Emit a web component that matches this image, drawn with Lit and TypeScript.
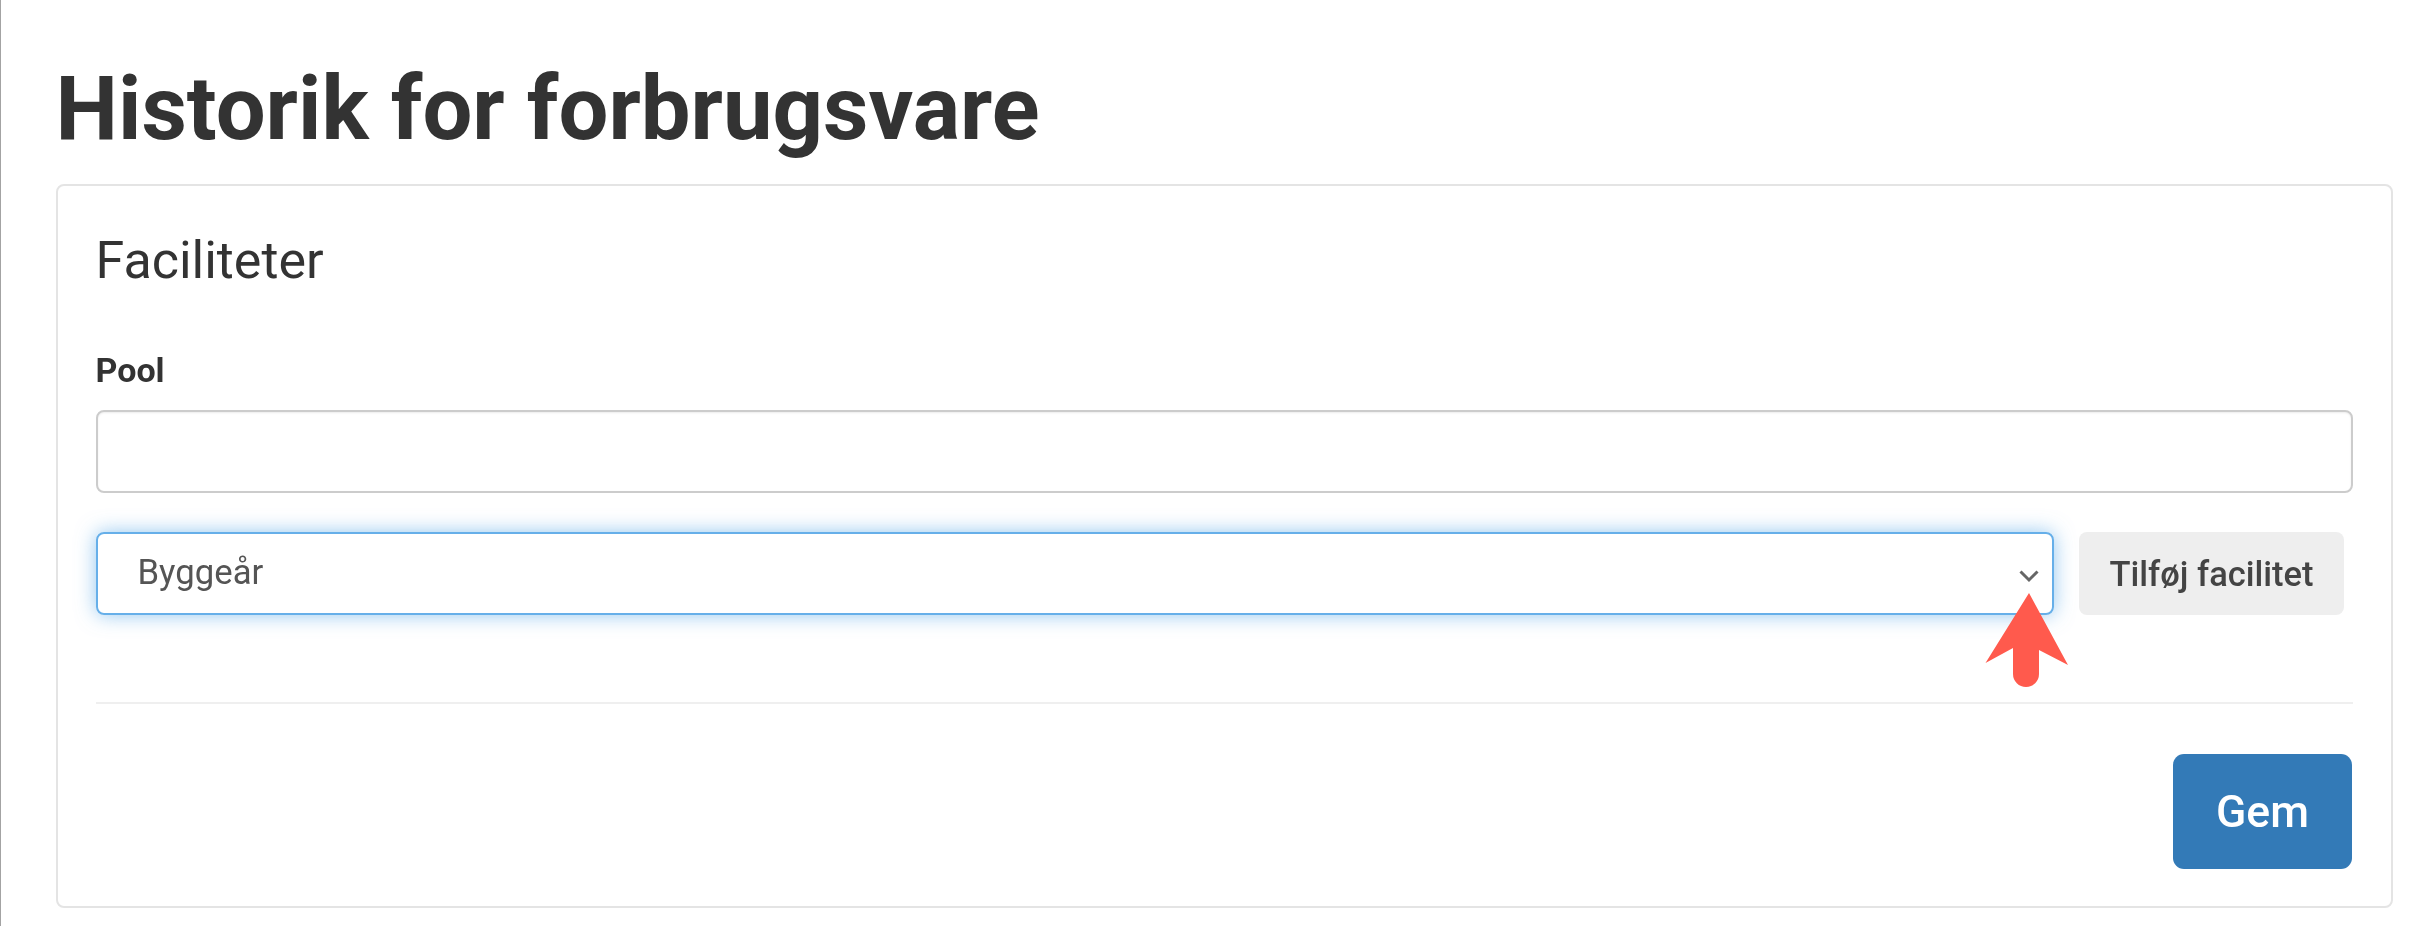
import { LitElement, html, css } from "lit";
import { customElement } from "lit/decorators.js";

@customElement("app-root")
export class AppRoot extends LitElement {
  static styles = css`
    :host {
      display: block;
      width: 2434px;
      height: 926px;
      box-sizing: border-box;
      border-left: 1.5px solid #a3a3a3;
      background: #fff;
      font-family: Roboto, "Liberation Sans", sans-serif;
      color: #333;
      overflow: hidden;
    }
    .page {
      padding: 0 41px 0 54.5px;
      position: relative;
      filter: blur(0.7px);
    }
    h1 {
      margin: 0;
      height: 184px;
      box-sizing: border-box;
      padding-top: 58px;
      font-size: 88.5px;
      line-height: 103px;
      font-weight: 700;
      color: #333;
    }
    .card {
      box-sizing: border-box;
      height: 724px;
      border: 2px solid #e4e4e4;
      border-radius: 8px;
      padding: 45px 38px 0 38px;
    }
    h2 {
      margin: 0;
      height: 122px;
      font-size: 52px;
      line-height: 60px;
      font-weight: 400;
      color: #333;
    }
    label {
      display: block;
      height: 57px;
      font-size: 34px;
      line-height: 35px;
      font-weight: 700;
      color: #333;
    }
    input {
      display: block;
      width: 100%;
      height: 83px;
      box-sizing: border-box;
      border: 2px solid #ccc;
      border-radius: 8px;
      background: #fff;
      box-shadow: inset 0 1px 2px rgba(0, 0, 0, 0.08);
      outline: none;
    }
    .row {
      display: flex;
      gap: 25px;
      margin-top: 39px;
      padding-right: 9px;
    }
    .select {
      flex: 1;
      height: 83px;
      box-sizing: border-box;
      border: 2px solid #66afe9;
      border-radius: 8px;
      box-shadow: 0 0 20px rgba(102, 175, 233, 0.7);
      display: flex;
      align-items: center;
      justify-content: space-between;
      padding: 0 11px 0 40px;
      font-size: 34.7px;
      color: #555;
    }
    .select span { margin-top: -4px; }
    .select svg { display: block; margin-top: 4px; }
    button {
      border: 0;
      font-family: inherit;
      border-radius: 8px;
    }
    .add {
      width: 265px;
      height: 83px;
      background: #eee;
      color: #444;
      font-size: 34.5px;
      font-weight: 500;
    }
    hr {
      border: 0;
      height: 2px;
      background: #efefef;
      margin: 87px 0 50px;
    }
    .actions { display: flex; justify-content: flex-end; padding-right: 1px; }
    .save {
      width: 179px;
      height: 115px;
      background: #337ab7;
      color: #fff;
      font-size: 44.5px;
      font-weight: 500;
      border-radius: 11px;
    }
    .arrow {
      position: absolute;
      left: 1980px;
      top: 590px;
    }
  `;

  render() {
    return html`
      <div class="page">
        <h1>Historik for forbrugsvare</h1>
        <section class="card">
          <h2>Faciliteter</h2>
          <label>Pool</label>
          <input type="text" />
          <div class="row">
            <div class="select">
              <span>Byggeår</span>
              <svg width="24" height="16" viewBox="0 0 24 16" fill="none">
                <path d="M3.5 3.5l8.5 8.5 8.5-8.5" stroke="#666" stroke-width="3" />
              </svg>
            </div>
            <button class="add">Tilføj facilitet</button>
          </div>
          <hr />
          <div class="actions"><button class="save">Gem</button></div>
        </section>
        <svg class="arrow" width="92" height="100" viewBox="1980 590 92 100">
          <path
            d="M2028 593L2067 665L2038 650V674A13 13 0 0 1 2012 674V648L1984.5 663Z"
            fill="#ff5a4d"
          />
        </svg>
      </div>
    `;
  }
}
